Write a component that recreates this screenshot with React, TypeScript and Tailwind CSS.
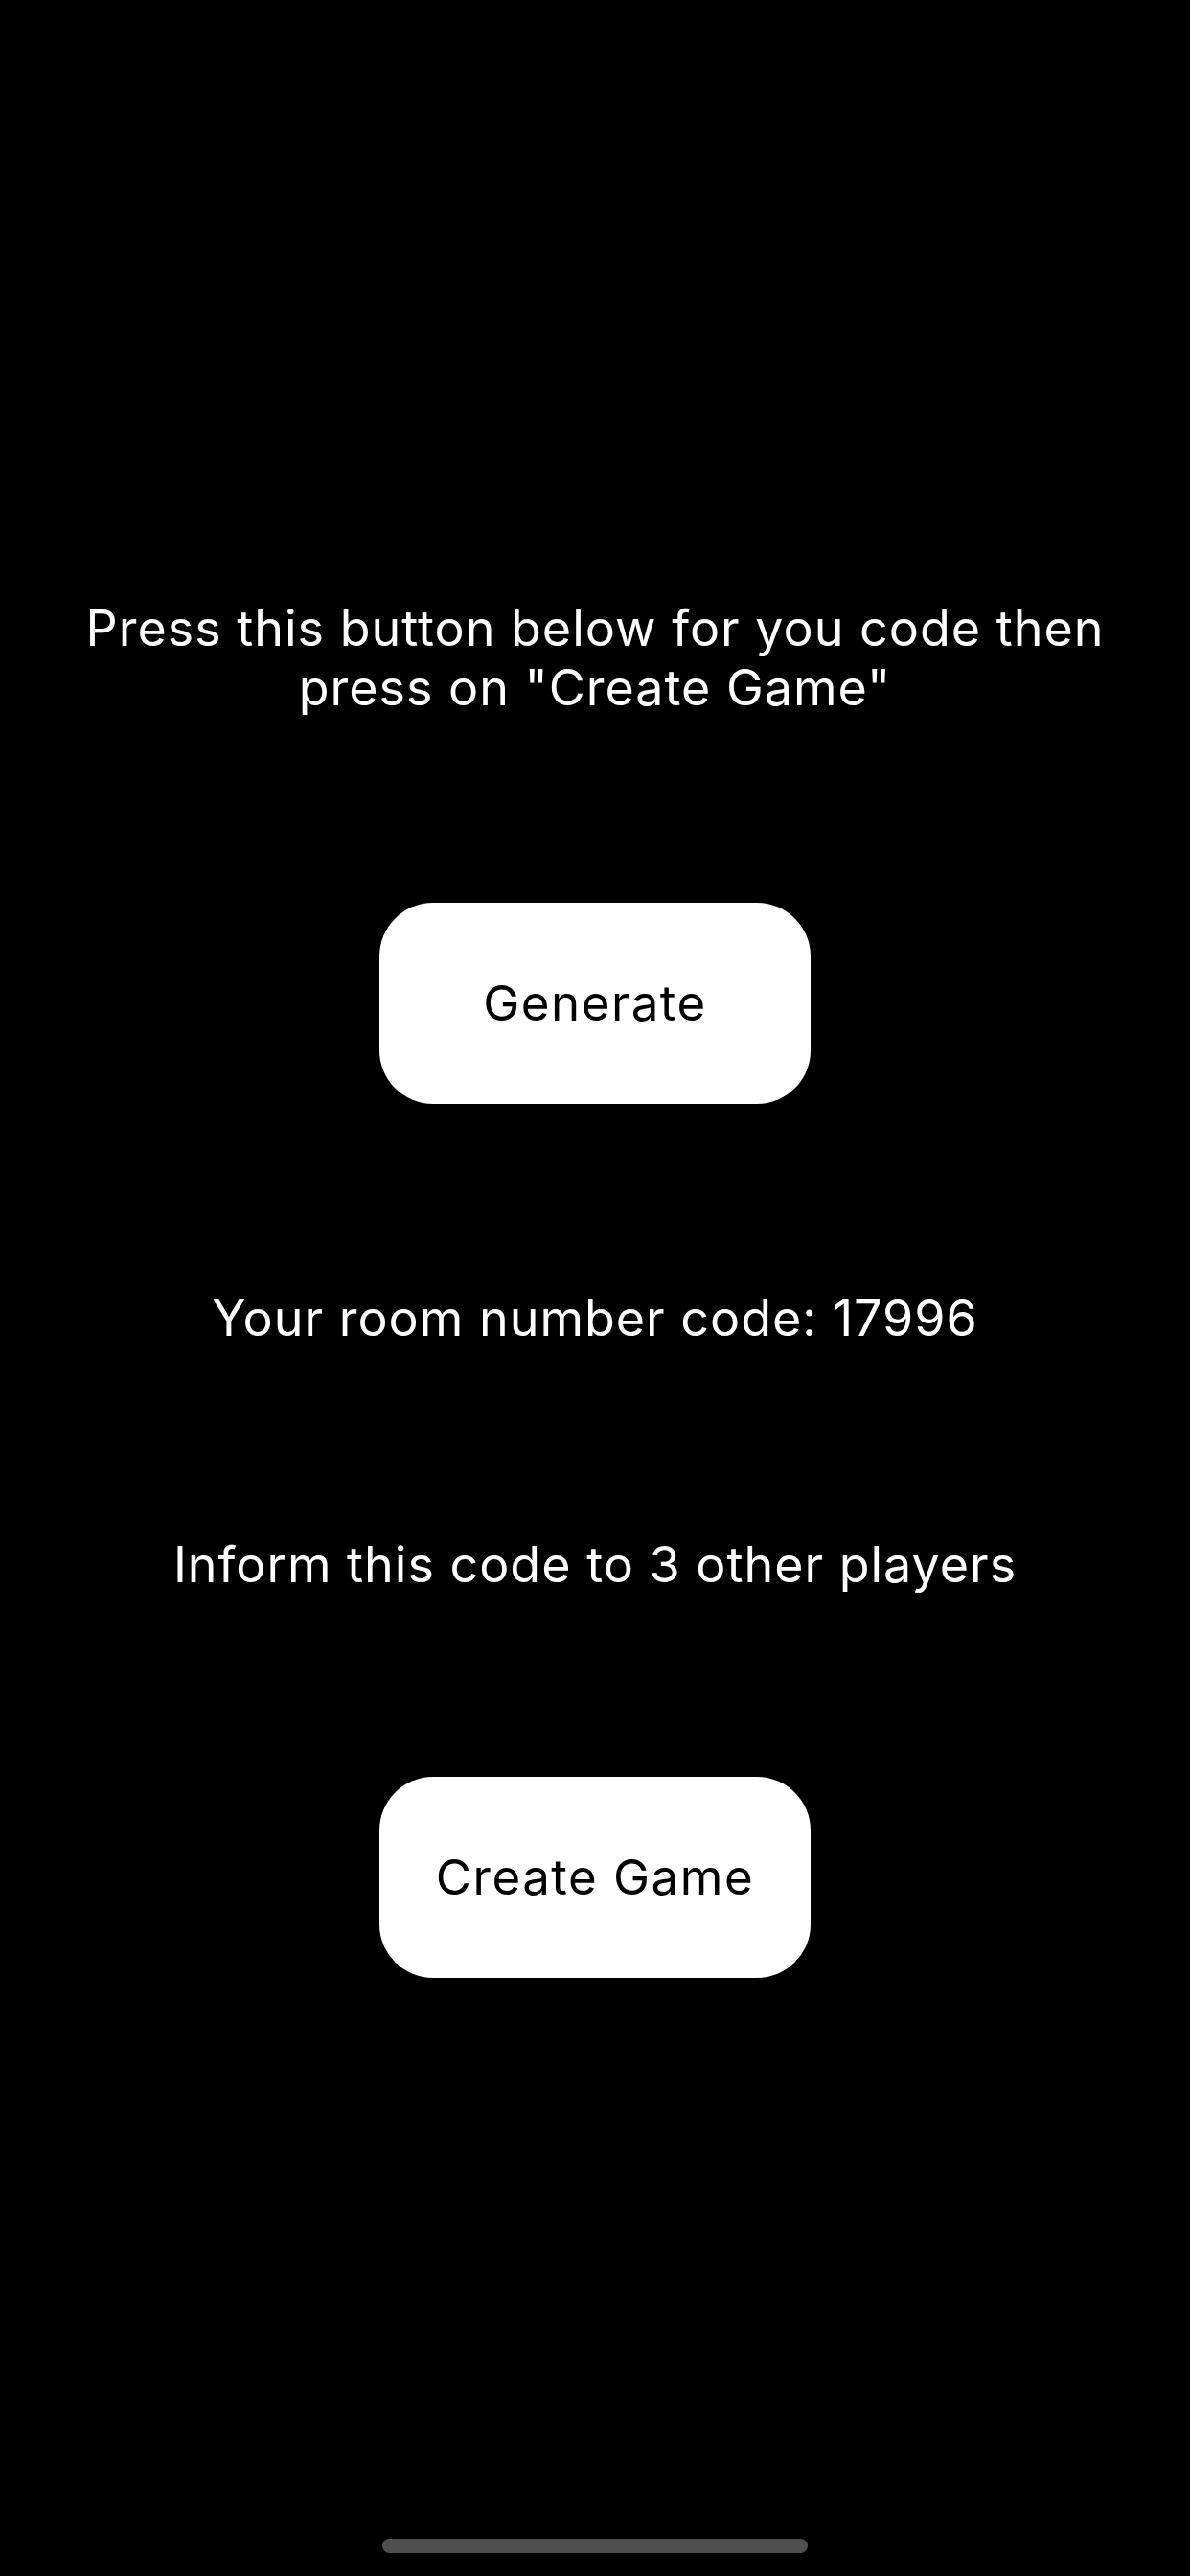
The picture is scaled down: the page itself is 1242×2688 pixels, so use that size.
import React from 'react';

const font = { fontFamily: 'Inter, "Noto Sans", sans-serif' };

export default function App() {
    const code = 17996;

    return (
        <div className="w-[1242px] h-[2688px] bg-black relative overflow-hidden" style={font}>
            <div className="flex flex-col items-center pt-[625px]">
                {/* Instructions */}
                <p className="text-white text-center text-[52px] leading-[62px] tracking-[1px] w-[1180px]">
                    Press this button below for you code then
                    <br />
                    press on "Create Game"
                </p>

                <button className="mt-[193px] w-[450px] h-[210px] rounded-[56px] bg-white text-black text-[51px] tracking-[1.5px]">
                    Generate
                </button>

                <p className="mt-[193px] text-white text-center text-[52px] leading-[62px] tracking-[1px]">
                    Your room number code: {code}
                </p>

                <p className="mt-[195px] text-white text-center text-[52px] leading-[62px] tracking-[1px]">
                    Inform this code to 3 other players
                </p>

                <button className="mt-[190px] w-[450px] h-[210px] rounded-[56px] bg-white text-black text-[51px] tracking-[1.5px]">
                    Create Game
                </button>
            </div>

            {/* Home indicator */}
            <div className="absolute left-[399px] top-[2649px] w-[444px] h-[15px] rounded-full bg-[#4f4f4f]" />
        </div>
    );
}
